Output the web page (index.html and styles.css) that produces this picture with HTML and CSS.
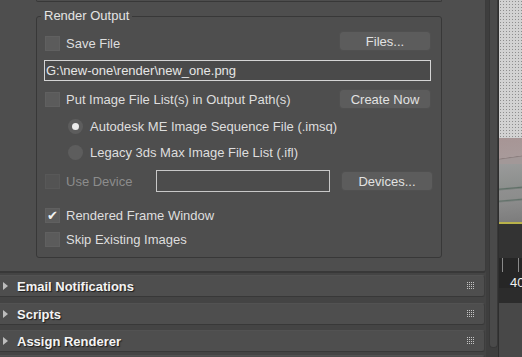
FILE: index.html
```html
<!DOCTYPE html>
<html lang="en">
<head>
    <meta charset="UTF-8">
    <meta name="viewport" content="width=device-width, initial-scale=1.0">
    <title>Render Setup - Render Output</title>
    <link rel="stylesheet" href="styles.css">
</head>
<body>
    <div class="app">
        <div class="cmd-panel">
            <div class="rollout-body">
                <div class="prev-group"></div>
                <fieldset class="group">
                    <legend>Render Output</legend>

                    <div class="row row-save">
                        <span class="check"></span>
                        <span class="label">Save File</span>
                        <button class="btn">Files...</button>
                    </div>

                    <div class="path">G:\new-one\render\new_one.png</div>

                    <div class="row row-list">
                        <span class="check"></span>
                        <span class="label">Put Image File List(s) in Output Path(s)</span>
                        <button class="btn">Create Now</button>
                    </div>

                    <div class="row row-radio first">
                        <span class="radio on"></span>
                        <span class="label">Autodesk ME Image Sequence File (.imsq)</span>
                    </div>
                    <div class="row row-radio">
                        <span class="radio"></span>
                        <span class="label">Legacy 3ds Max Image File List (.ifl)</span>
                    </div>

                    <div class="row row-device">
                        <span class="check off"></span>
                        <span class="label disabled device-label">Use Device</span>
                        <div class="device-box"></div>
                        <button class="btn btn-devices">Devices...</button>
                    </div>

                    <div class="row row-frame">
                        <span class="check">&#10004;</span>
                        <span class="label">Rendered Frame Window</span>
                    </div>
                    <div class="row row-skip">
                        <span class="check"></span>
                        <span class="label">Skip Existing Images</span>
                    </div>
                </fieldset>
            </div>

            <div class="rollout-head first">
                <span class="arrow"></span>
                <span class="title">Email Notifications</span>
                <svg class="grip" width="8" height="8" viewBox="0 0 8 8">
                    <g fill="#c4c4c4">
                        <rect x="0" y="0" width="1" height="1"/><rect x="2" y="0" width="1" height="1"/><rect x="4" y="0" width="1" height="1"/><rect x="6" y="0" width="1" height="1"/>
                        <rect x="0" y="2" width="1" height="1"/><rect x="2" y="2" width="1" height="1"/><rect x="4" y="2" width="1" height="1"/><rect x="6" y="2" width="1" height="1"/>
                        <rect x="0" y="4" width="1" height="1"/><rect x="2" y="4" width="1" height="1"/><rect x="4" y="4" width="1" height="1"/><rect x="6" y="4" width="1" height="1"/>
                        <rect x="0" y="6" width="1" height="1"/><rect x="2" y="6" width="1" height="1"/><rect x="4" y="6" width="1" height="1"/><rect x="6" y="6" width="1" height="1"/>
                    </g>
                </svg>
            </div>
            <div class="rollout-head">
                <span class="arrow"></span>
                <span class="title">Scripts</span>
                <svg class="grip" width="8" height="8" viewBox="0 0 8 8">
                    <g fill="#c4c4c4">
                        <rect x="0" y="0" width="1" height="1"/><rect x="2" y="0" width="1" height="1"/><rect x="4" y="0" width="1" height="1"/><rect x="6" y="0" width="1" height="1"/>
                        <rect x="0" y="2" width="1" height="1"/><rect x="2" y="2" width="1" height="1"/><rect x="4" y="2" width="1" height="1"/><rect x="6" y="2" width="1" height="1"/>
                        <rect x="0" y="4" width="1" height="1"/><rect x="2" y="4" width="1" height="1"/><rect x="4" y="4" width="1" height="1"/><rect x="6" y="4" width="1" height="1"/>
                        <rect x="0" y="6" width="1" height="1"/><rect x="2" y="6" width="1" height="1"/><rect x="4" y="6" width="1" height="1"/><rect x="6" y="6" width="1" height="1"/>
                    </g>
                </svg>
            </div>
            <div class="rollout-head last">
                <span class="arrow"></span>
                <span class="title">Assign Renderer</span>
                <svg class="grip" width="8" height="8" viewBox="0 0 8 8">
                    <g fill="#c4c4c4">
                        <rect x="0" y="0" width="1" height="1"/><rect x="2" y="0" width="1" height="1"/><rect x="4" y="0" width="1" height="1"/><rect x="6" y="0" width="1" height="1"/>
                        <rect x="0" y="2" width="1" height="1"/><rect x="2" y="2" width="1" height="1"/><rect x="4" y="2" width="1" height="1"/><rect x="6" y="2" width="1" height="1"/>
                        <rect x="0" y="4" width="1" height="1"/><rect x="2" y="4" width="1" height="1"/><rect x="4" y="4" width="1" height="1"/><rect x="6" y="4" width="1" height="1"/>
                        <rect x="0" y="6" width="1" height="1"/><rect x="2" y="6" width="1" height="1"/><rect x="4" y="6" width="1" height="1"/><rect x="6" y="6" width="1" height="1"/>
                    </g>
                </svg>
            </div>
            <div class="rollout-head peek"></div>
        </div>

        <div class="scroll">
            <div class="scroll-track"></div>
        </div>

        <div class="viewport">
            <div class="vp-dots"></div>
            <div class="vp-pink"></div>
            <div class="vp-floor"></div>
            <div class="vp-edge"></div>
            <div class="vp-dark"></div>
            <div class="vp-timeline">
                <span class="tick t1"></span>
                <span class="tick t2"></span>
                <span class="frame-num">40</span>
            </div>
            <div class="vp-dark2"></div>
            <div class="vp-rest"></div>
        </div>
    </div>
</body>
</html>
```

FILE: styles.css
```css
body {
    margin: 0;
    padding: 0;
    background-color: #444444;
    font-family: "Liberation Sans", Arial, sans-serif;
    font-size: 13px;
    color: #dedede;
    overflow: hidden;
}
.app {
    display: flex;
    width: 522px;
    height: 357px;
    overflow: hidden;
}
.cmd-panel {
    width: 486px;
    flex: none;
    display: flex;
    flex-direction: column;
}
.rollout-body {
    flex: none;
    height: 271px;
    background-color: #4e4e4e;
    border-bottom: 2px solid #383838;
    border-right: 1px solid #3c3c3c;
    border-bottom-right-radius: 3px;
    box-sizing: content-box;
    width: 485px;
}
.prev-group {
    width: 404px;
    height: 1px;
    margin-left: 36px;
    border: 1px solid #383838;
    border-top: none;
    border-radius: 0 0 3px 3px;
}
.group {
    margin: 6px 0 0 36px;
    width: 406px;
    box-sizing: border-box;
    padding: 0 10px 10px 8px;
    border: 1px solid #383838;
    border-radius: 3px;
    height: 250px;
}
.group legend {
    padding: 0 3px;
    margin-left: -4px;
    line-height: 16px;
    color: #e4e4e4;
}
.row {
    display: flex;
    align-items: center;
}
.check {
    width: 13px;
    height: 13px;
    flex: none;
    background-color: #5b5b5b;
    border: 1px solid #606060;
    color: #f2f2f2;
    font-size: 13px;
    line-height: 13px;
    text-align: center;
}
.check.off {
    background-color: #535353;
    border-color: #585858;
}
.label {
    margin-left: 6px;
    white-space: nowrap;
}
.label.disabled {
    color: #8c8c8c;
}
.btn {
    margin-left: auto;
    width: 92px;
    height: 20px;
    padding: 0;
    flex: none;
    background-color: #5c5c5c;
    border: 1px solid #505050;
    border-radius: 4px;
    color: #e2e2e2;
    font-family: "Liberation Sans", Arial, sans-serif;
    font-size: 13px;
}
.row-save {
    margin-top: 7px;
    height: 20px;
}
.row-save .check {
    align-self: flex-end;
}
.row-save .label {
    align-self: flex-end;
    line-height: 15px;
}
.path {
    margin: 9px 0 0 -1px;
    height: 19px;
    border: 1px solid #d4d4d4;
    background-color: #4a4a4a;
    padding-left: 1px;
    line-height: 19px;
    color: #e6e6e6;
}
.row-list {
    margin-top: 8px;
    height: 20px;
}
.row-radio {
    height: 16px;
    margin-top: 10px;
    padding-left: 23px;
}
.row-radio.first {
    margin-top: 9px;
}
.radio {
    width: 15px;
    height: 15px;
    flex: none;
    border-radius: 50%;
    background-color: #5d5d5d;
    display: flex;
    align-items: center;
    justify-content: center;
}
.radio.on::after {
    content: "";
    width: 7px;
    height: 7px;
    border-radius: 50%;
    background-color: #ececec;
}
.row-radio .label {
    margin-left: 7px;
}
.row-device {
    margin-top: 10px;
    height: 22px;
}
.device-label {
    width: 90px;
    flex: none;
}
.device-box {
    width: 172px;
    height: 20px;
    flex: none;
    border: 1px solid #c8c8c8;
    background-color: #4c4c4c;
}
.btn-devices {
    margin-left: 11px;
    margin-right: -2px;
}
.row-frame {
    margin-top: 16px;
    height: 15px;
}
.row-skip {
    margin-top: 9px;
    height: 15px;
}
.rollout-head {
    height: 22px;
    width: 485px;
    box-sizing: border-box;
    margin-top: 5px;
    background-color: #4e4e4e;
    border-bottom: 1px solid #383838;
    border-right: 1px solid #3d3d3d;
    border-top: 1px solid #525252;
    border-radius: 0 3px 3px 0;
    display: flex;
    align-items: center;
    flex: none;
}
.rollout-head.first {
    margin-top: 2px;
}
.rollout-head.first + .rollout-head {
    margin-top: 6px;
}
.rollout-head.peek {
    margin-top: 3px;
}
.arrow {
    width: 0;
    height: 0;
    margin-left: 3px;
    border-top: 4px solid transparent;
    border-bottom: 4px solid transparent;
    border-left: 5px solid #bdbdbd;
}
.title {
    margin-left: 9px;
    font-weight: bold;
    color: #f4f4f4;
    text-shadow: 1px 1px 1px #1c1c1c;
}
.grip {
    margin-left: auto;
    margin-right: 9px;
}
.scroll {
    width: 12px;
    flex: none;
    background-color: #3e3e3e;
    display: flex;
    justify-content: flex-end;
}
.scroll-track {
    width: 7px;
    height: 347px;
    background-color: #4a4a4a;
    border: 1px solid #383838;
    border-top: none;
    border-radius: 0 0 4px 4px;
}
.viewport {
    width: 24px;
    flex: none;
    display: flex;
    flex-direction: column;
    border-left: 1px solid #2e2e2e;
    box-sizing: border-box;
}
.viewport > div {
    flex: none;
}
.vp-dots {
    height: 138px;
    background-color: #d2d2d2;
    background-image: radial-gradient(#8e8e8e 0.8px, transparent 1px);
    background-size: 3px 3px;
}
.vp-pink {
    height: 26px;
    background: linear-gradient(172deg, #a79595 0%, #a89a9a 70%, #8a7d7d 72%, #a29898 76%);
}
.vp-floor {
    height: 58px;
    background: linear-gradient(175deg, #9a9a9a 0%, #8c8f8d 40%, #5e6f66 42%, #8f8f8f 45%, #8c8d8c 60%, #62716a 62%, #8b8b8b 65%, #7c7c7c 100%);
}
.vp-edge {
    height: 2px;
    background-color: #b9b24a;
}
.vp-dark {
    height: 34px;
    background-color: #333333;
}
.vp-timeline {
    height: 30px;
    background-color: #262626;
    position: relative;
}
.tick {
    position: absolute;
    top: 0;
    width: 1px;
    height: 14px;
    background-color: #8a8a8a;
}
.t1 { left: 3px; }
.t2 { left: 19px; }
.frame-num {
    position: absolute;
    left: 11px;
    top: 18px;
    color: #f0f0f0;
    font-size: 13px;
    line-height: 14px;
}
.vp-dark2 {
    height: 15px;
    background-color: #2c2c2c;
}
.viewport > .vp-rest {
    flex: 1;
    background-color: #484848;
}
```
